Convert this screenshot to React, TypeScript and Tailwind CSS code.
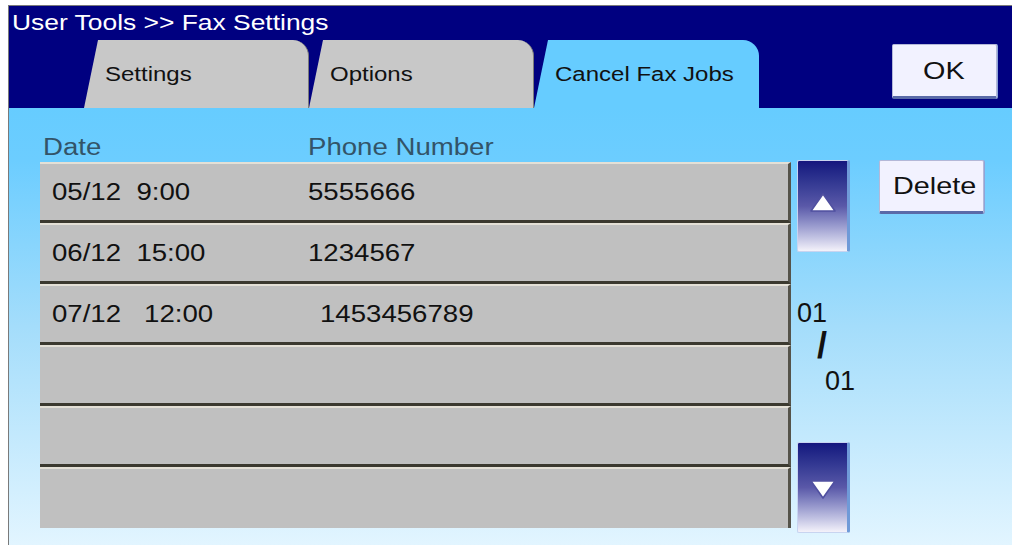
import React from 'react';

const jobs = [
  { date: '05/12  9:00', phone: '5555666', indent: 0 },
  { date: '06/12  15:00', phone: '1234567', indent: 0 },
  { date: '07/12   12:00', phone: '1453456789', indent: 12 },
  { date: '', phone: '', indent: 0 },
  { date: '', phone: '', indent: 0 },
  { date: '', phone: '', indent: 0 },
];

// panel text is drawn a bit wider than the stock face
const Wide: React.FC<{ children: React.ReactNode; className?: string }> = ({ children, className = '' }) => (
  <span className={`inline-block origin-left scale-x-[1.2] whitespace-pre ${className}`}>{children}</span>
);

const Tab: React.FC<{ label: string; active?: boolean }> = ({ label, active }) => (
  <div
    className={`flex h-full w-[225px] items-center rounded-tr-[16px] pl-[21px] [clip-path:polygon(14px_0,100%_0,100%_100%,0_100%)] ${
      active ? 'bg-[#66ccff]' : 'border-r border-r-[#7a7a7a] bg-[#c8c8c8]'
    }`}
  >
    <Wide className="text-[20px] leading-none text-[#111]">{label}</Wide>
  </div>
);

const PanelButton: React.FC<{ label: string; className?: string }> = ({ label, className = '' }) => (
  <button
    className={`flex items-center justify-center rounded-[2px] border border-[#b4b8d8] border-b-[3px] border-b-[#5a6aa8] bg-[#f2f2ff] shadow-[1px_0_0_#8ea4d8] ${className}`}
  >
    <Wide className="-translate-x-[4px] text-[24px] leading-none text-[#111]">{label}</Wide>
  </button>
);

const ScrollButton: React.FC<{ down?: boolean; className?: string }> = ({ down, className = '' }) => (
  <button
    className={`flex w-[53px] items-center justify-center rounded-[2px] border border-[#c8d4f0] border-r-[3px] border-r-[#6f9ad8] bg-gradient-to-b from-[#15157e] via-[#5a58a8] to-[#f4f2fa] ${className}`}
  >
    <svg width="28" height="22" viewBox="0 0 28 22" className={down ? 'mt-[2px]' : 'mt-[-6px]'}>
      {down ? (
        <polygon points="2,3 26,3 14,20" fill="#fff" stroke="#5050a0" strokeWidth="1.6" strokeLinejoin="round" />
      ) : (
        <polygon points="14,2 26,19 2,19" fill="#fff" stroke="#5050a0" strokeWidth="1.6" strokeLinejoin="round" />
      )}
    </svg>
  </button>
);

export default function App() {
  return (
    <div className="h-[546px] w-[1018px] bg-white pt-[5px] pl-[8px] font-['Liberation_Sans',Arial,sans-serif]">
      <div className="flex h-[540px] w-[1004px] flex-col border-t border-l border-[#7a7a7a]">
        {/* title and tab strip */}
        <div className="bg-[#000080]">
          <div className="flex h-[34px] items-center pl-[3px]">
            <Wide className="text-[22px] leading-none text-white">User Tools &gt;&gt; Fax Settings</Wide>
          </div>
          <div className="flex h-[68px] items-end pl-[75px]">
            <Tab label="Settings" />
            <Tab label="Options" />
            <Tab label="Cancel Fax Jobs" active />
            <PanelButton label="OK" className="mt-[4px] mr-[15px] ml-auto h-[55px] w-[105px] self-start" />
          </div>
        </div>

        {/* job list */}
        <div className="flex flex-1 bg-[linear-gradient(180deg,#66ccff_0%,#6ccdff_12%,#a4ddfb_50%,#e2f5ff_100%)] pl-[31px]">
          <div className="flex w-[751px] flex-col">
            <div className="flex h-[54px] items-end pb-[3px] pl-[3px] text-[23px] leading-none text-[#335468]">
              <div className="w-[265px]">
                <Wide>Date</Wide>
              </div>
              <Wide>Phone Number</Wide>
            </div>
            {jobs.map((job, i) => (
              <div
                key={i}
                className={`flex h-[61px] items-center border-t-2 border-r-[3px] border-t-[#e4e0d6] border-r-[#55534a] bg-[#c0c0c0] pl-[12px] text-[23px] leading-none text-[#111] ${
                  i < jobs.length - 1 ? 'border-b-[3px] border-b-[#3b392f]' : ''
                }`}
              >
                <div className="w-[256px]">
                  <Wide>{job.date}</Wide>
                </div>
                <div style={{ paddingLeft: job.indent }}>
                  <Wide>{job.phone}</Wide>
                </div>
              </div>
            ))}
          </div>

          {/* scroll controls */}
          <div className="ml-[6px] flex w-[53px] flex-col pt-[52px]">
            <ScrollButton className="h-[92px]" />
            <div className="flex h-[190px] flex-col items-start whitespace-nowrap text-[#111]">
              <span className="mt-[47px] text-[27px] leading-[28px]">01</span>
              <span className="mt-[2px] ml-[20px] text-[36px] leading-[34px] font-semibold">/</span>
              <span className="mt-[4px] ml-[28px] text-[27px] leading-[28px]">01</span>
            </div>
            <ScrollButton down className="h-[91px]" />
          </div>

          <div className="ml-[29px] pt-[52px]">
            <PanelButton label="Delete" className="h-[54px] w-[105px]" />
          </div>
        </div>
      </div>
    </div>
  );
}
